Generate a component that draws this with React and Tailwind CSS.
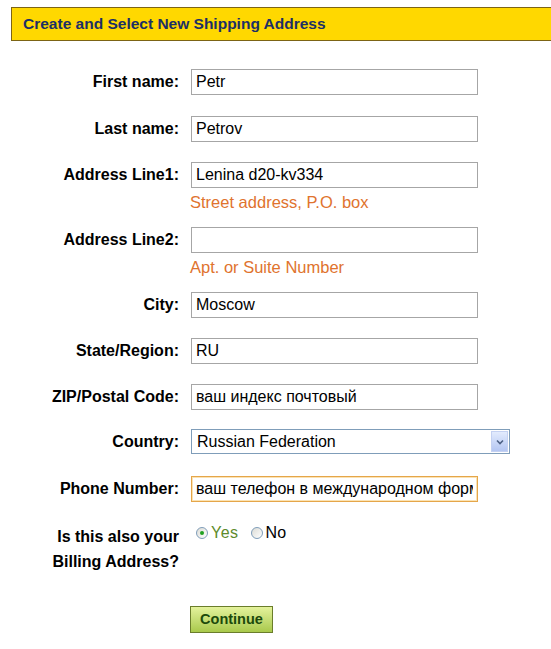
import { useState } from 'react'

const FONT = { fontFamily: '"Liberation Sans", Arial, sans-serif' }

function Label({ children }) {
  return (
    <div className="w-[180px] pr-[1px] text-right text-[16px] font-bold leading-[25px] text-black shrink-0">
      {children}
    </div>
  )
}

function TextField({ value, hint, focused }) {
  return (
    <div className="flex flex-col">
      <input
        readOnly
        value={value}
        className={`w-[287px] h-[26px] px-[4px] text-[16px] text-black bg-white outline-none border ${
          focused ? 'border-[#e5a64a] shadow-[inset_0_0_0_1px_#fbe3b4]' : 'border-[#a6a6a6]'
        }`}
        style={FONT}
      />
      {hint && <p className="mt-[5px] text-[16.5px] leading-[18px] text-[#e0732e] -ml-[1px]">{hint}</p>}
    </div>
  )
}

function Row({ label, top, children }) {
  return (
    <div className="flex items-start gap-[11px]" style={{ marginTop: top }}>
      <Label>{label}</Label>
      {children}
    </div>
  )
}

function Radio({ checked }) {
  return (
    <span className="w-[12px] h-[12px] rounded-full border border-[#7f9db9] bg-gradient-to-br from-[#dcdcd6] to-white flex items-center justify-center">
      {checked && <span className="w-[4px] h-[4px] rounded-full bg-[#21a121]" />}
    </span>
  )
}

export default function App() {
  const [billing, setBilling] = useState(true)

  return (
    <div className="w-[551px] h-[649px] bg-white overflow-hidden pt-[7px]" style={FONT}>
      <div className="ml-[11px] -mr-[10px] h-[34px] bg-[#ffd800] border border-[#7c6415] flex items-center pl-[11px]">
        <h1 className="text-[15.5px] font-bold text-[#1c2f66]">Create and Select New Shipping Address</h1>
      </div>

      <Row label="First name:" top={28}>
        <TextField value="Petr" />
      </Row>
      <Row label="Last name:" top={21}>
        <TextField value="Petrov" />
      </Row>
      <Row label="Address Line1:" top={20}>
        <TextField value="Lenina d20-kv334" hint="Street address, P.O. box" />
      </Row>
      <Row label="Address Line2:" top={16}>
        <TextField value="" hint="Apt. or Suite Number" />
      </Row>
      <Row label="City:" top={16}>
        <TextField value="Moscow" />
      </Row>
      <Row label="State/Region:" top={20}>
        <TextField value="RU" />
      </Row>
      <Row label="ZIP/Postal Code:" top={20}>
        <TextField value="ваш индекс почтовый" />
      </Row>
      <Row label="Country:" top={19}>
        <div className="w-[319px] h-[25px] border border-[#7f9db9] bg-white flex items-center justify-between pl-[5px] pr-[1px] text-[16px] text-black">
          <span>Russian Federation</span>
          <span className="w-[17px] h-[21px] bg-gradient-to-b from-[#e3ebfd] to-[#b4c6f2] border border-[#c4d1f2] flex items-center justify-center">
            <svg width="8" height="6" viewBox="0 0 8 6">
              <path d="M1 1.5 L4 4.5 L7 1.5" fill="none" stroke="#4d6185" strokeWidth="1.6" />
            </svg>
          </span>
        </div>
      </Row>
      <Row label="Phone Number:" top={22}>
        <TextField value="ваш телефон в международном формате" focused />
      </Row>

      <div className="flex items-start gap-[11px] mt-[22px]">
        <div className="w-[180px] pr-[1px] text-right text-[16px] font-bold leading-[25px] text-black shrink-0">
          Is this also your
          <br />
          Billing Address?
        </div>
        <div className="flex items-center text-[16px] leading-[18px] pl-[5px]">
          <button onClick={() => setBilling(true)} className="flex items-center gap-[3px]">
            <Radio checked={billing} />
            <span className="text-[#5d8b2c] tracking-[0.5px]">Yes</span>
          </button>
          <button onClick={() => setBilling(false)} className="flex items-center gap-[3px] ml-[12px]">
            <Radio checked={!billing} />
            <span className="text-black">No</span>
          </button>
        </div>
      </div>

      <div className="ml-[190px] mt-[32px]">
        <button className="w-[83px] h-[27px] border border-[#6a7d2b] bg-gradient-to-b from-[#e4f29b] to-[#a9c94b] text-[14.5px] font-bold text-[#1c4a0b]">
          Continue
        </button>
      </div>
    </div>
  )
}
